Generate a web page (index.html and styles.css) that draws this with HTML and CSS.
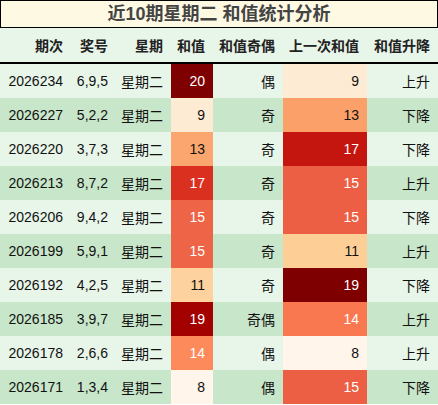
FILE: index.html
```html
<!DOCTYPE html>
<html lang="zh-CN">

<head>
    <meta charset="UTF-8">
    <title>和值统计分析</title>
    <link rel="stylesheet" href="styles.css">
</head>

<body>
    <div class="title">近10期星期二 和值统计分析</div>
    <table class="stats">
        <colgroup>
            <col class="c-issue">
            <col class="c-nums">
            <col class="c-day">
            <col class="c-sum">
            <col class="c-parity">
            <col class="c-prev">
            <col class="c-trend">
        </colgroup>
        <thead>
            <tr>
                <th>期次</th>
                <th>奖号</th>
                <th>星期</th>
                <th>和值</th>
                <th>和值奇偶</th>
                <th>上一次和值</th>
                <th>和值升降</th>
            </tr>
        </thead>
        <tbody>
            <tr>
                <td>2026234</td><td>6,9,5</td><td>星期二</td>
                <td class="heat light" style="background:#7f0000">20</td>
                <td>偶</td>
                <td class="heat" style="background:#feebd3">9</td>
                <td>上升</td>
            </tr>
            <tr>
                <td>2026227</td><td>5,2,2</td><td>星期二</td>
                <td class="heat" style="background:#feebd3">9</td>
                <td>奇</td>
                <td class="heat" style="background:#fca06a">13</td>
                <td>下降</td>
            </tr>
            <tr>
                <td>2026220</td><td>3,7,3</td><td>星期二</td>
                <td class="heat" style="background:#fca66f">13</td>
                <td>奇</td>
                <td class="heat light" style="background:#c4160f">17</td>
                <td>下降</td>
            </tr>
            <tr>
                <td>2026213</td><td>8,7,2</td><td>星期二</td>
                <td class="heat light" style="background:#d9301f">17</td>
                <td>奇</td>
                <td class="heat light" style="background:#ec5f44">15</td>
                <td>上升</td>
            </tr>
            <tr>
                <td>2026206</td><td>9,4,2</td><td>星期二</td>
                <td class="heat light" style="background:#ee6446">15</td>
                <td>奇</td>
                <td class="heat light" style="background:#ec5f44">15</td>
                <td>下降</td>
            </tr>
            <tr>
                <td>2026199</td><td>5,9,1</td><td>星期二</td>
                <td class="heat light" style="background:#ee6446">15</td>
                <td>奇</td>
                <td class="heat" style="background:#fdcf97">11</td>
                <td>上升</td>
            </tr>
            <tr>
                <td>2026192</td><td>4,2,5</td><td>星期二</td>
                <td class="heat" style="background:#fdd29e">11</td>
                <td>奇</td>
                <td class="heat light" style="background:#7f0000">19</td>
                <td>下降</td>
            </tr>
            <tr>
                <td>2026185</td><td>3,9,7</td><td>星期二</td>
                <td class="heat light" style="background:#a30000">19</td>
                <td>奇偶</td>
                <td class="heat light" style="background:#f9784f">14</td>
                <td>上升</td>
            </tr>
            <tr>
                <td>2026178</td><td>2,6,6</td><td>星期二</td>
                <td class="heat light" style="background:#fc8a5a">14</td>
                <td>偶</td>
                <td class="heat" style="background:#fff5eb">8</td>
                <td>上升</td>
            </tr>
            <tr>
                <td>2026171</td><td>1,3,4</td><td>星期二</td>
                <td class="heat" style="background:#fff5eb">8</td>
                <td>偶</td>
                <td class="heat light" style="background:#ec5f44">15</td>
                <td>下降</td>
            </tr>
        </tbody>
    </table>
</body>

</html>
```

FILE: styles.css
```css
body,
html {
    margin: 0;
}

body {
    width: 438px;
    font-family: "Liberation Sans", "Noto Sans CJK SC", sans-serif;
    color: #111;
    background: #ffffff;
}

.title {
    height: 26px;
    line-height: 26px;
    border: 1px solid #000;
    background: #fdf9e3;
    color: #444;
    font-size: 18px;
    font-weight: bold;
    text-align: center;
}

.stats {
    width: 438px;
    border-collapse: collapse;
    table-layout: fixed;
    font-size: 14px;
}

.c-issue { width: 71px; }
.c-nums { width: 45px; }
.c-day { width: 55px; }
.c-sum { width: 42px; }
.c-parity { width: 70px; }
.c-prev { width: 84px; }
.c-trend { width: 71px; }

.stats th {
    height: 34px;
    padding: 0 8px 0 0;
    background: #e8f5e9;
    border-bottom: 2px solid #000;
    font-weight: bold;
    color: #222;
    text-align: right;
    white-space: nowrap;
}

.stats td {
    height: 34px;
    padding: 0 8px 0 0;
    text-align: right;
    white-space: nowrap;
}

.stats tbody tr:nth-child(odd) {
    background: #e8f5e9;
}

.stats tbody tr:nth-child(even) {
    background: #c8e6c9;
}

.heat {
    color: #111;
}

.heat.light {
    color: #fff;
}
```
